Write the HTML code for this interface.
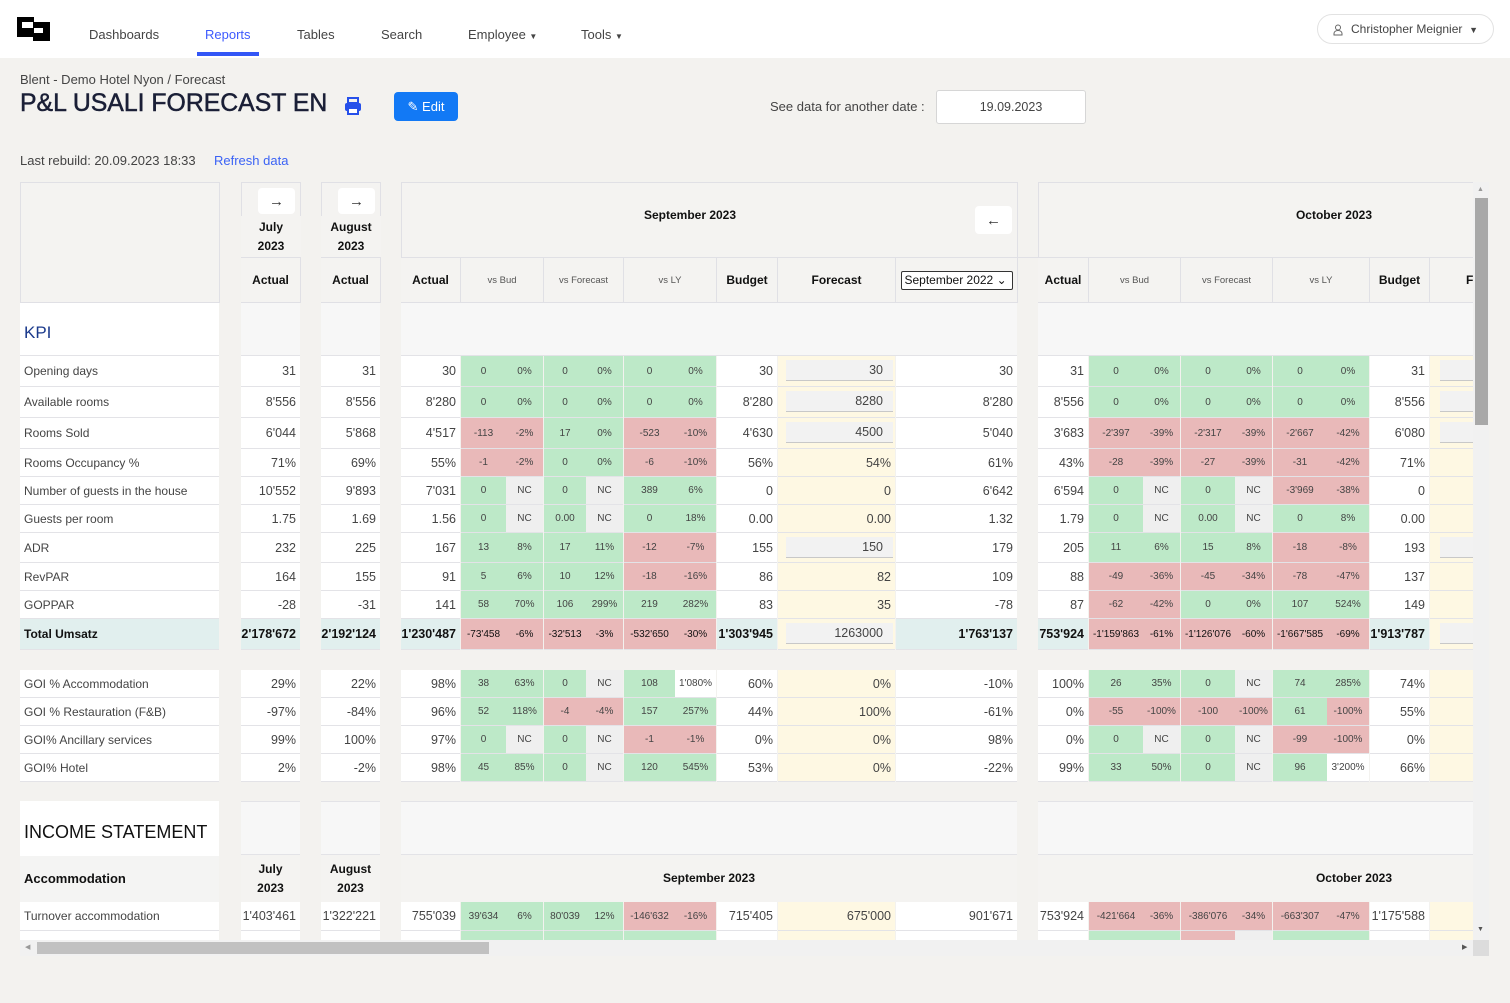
<!DOCTYPE html>
<html><head><meta charset="utf-8"><style>
*{box-sizing:border-box;margin:0;padding:0}
body{width:1510px;height:1003px;background:#f3f2ef;font-family:"Liberation Sans",Arial,sans-serif;color:#444;position:relative;overflow:hidden}
.abs{position:absolute}
.nav{position:absolute;left:0;top:0;width:1510px;height:58px;background:#fff}
.nav span{position:absolute;top:27px;font-size:13px;color:#444}
#wrap{position:absolute;left:0;top:0;width:1473px;height:940px;overflow:hidden}
.r{position:absolute;left:0;width:1700px}
.r>div{position:absolute;top:0;height:100%;display:flex;align-items:center;justify-content:flex-end;padding-right:4px;background:#fff;border-bottom:1px solid #e3e3e7;font-size:12.5px;color:#444;white-space:nowrap}
.r>div.L{justify-content:flex-start;padding-left:4px;font-size:12px}
.L{left:20px;width:199px}.J{left:241px;width:59px}.A{left:321px;width:59px}
.s1{left:401px;width:59px}.s2a{left:461px;width:45px}.s2b{left:506px;width:37px}
.s3a{left:544px;width:42px}.s3b{left:586px;width:37px}.s4a{left:624px;width:51px}.s4b{left:675px;width:41px}
.s5{left:717px;width:60px}.s6{left:778px;width:117px}.s7{left:896px;width:121px}
.o1{left:1038px;width:50px}.o2a{left:1089px;width:54px}.o2b{left:1143px;width:37px}
.o3a{left:1181px;width:54px}.o3b{left:1235px;width:37px}.o4a{left:1273px;width:54px}.o4b{left:1327px;width:42px}
.o5{left:1370px;width:59px}.o6{left:1430px;width:200px}
.r>.s2a,.r>.s2b,.r>.s3a,.r>.s3b,.r>.s4a,.r>.s4b,.r>.o2a,.r>.o2b,.r>.o3a,.r>.o3b,.r>.o4a,.r>.o4b{justify-content:center;padding:0;font-size:10px}
.r>.g{background:#bde9c8}.r>.d{background:#e9b9b9}.r>.n{background:#efefef}.r>.y{background:#fef8e3}
.r>div i{font-style:normal;position:absolute;left:8px;width:107px;top:50%;margin-top:-11px;height:21px;background:#f2f2f2;border-bottom:1px solid #c8c8c8;text-align:right;padding-right:10px;line-height:20px}
.o6 i{left:10px!important}
.t>div{background:#e1efee!important;font-weight:bold;color:#111!important}
.t>div.d{background:#e9b9b9!important;font-weight:normal}
.t>div.y{background:#fef8e3!important}
.hb{position:absolute;background:#f4f3f1;border:1px solid #e0e0e5}
.hc{position:absolute;display:flex;align-items:center;justify-content:center;font-size:12px;font-weight:bold;color:#111;border-right:1px solid #e0e0e5;border-bottom:1px solid #e0e0e5;background:#f4f3f1;text-align:center;line-height:19px}
.hc.sm{font-weight:normal;font-size:9.5px;color:#555}
.btn{position:absolute;background:#fff;border-radius:4px;display:flex;align-items:center;justify-content:center;font-size:15px;color:#333}
</style></head><body>
<div class="nav">
<svg class="abs" style="left:0;top:0" width="60" height="50"><rect x="17" y="17" width="17" height="20" fill="#000"/><rect x="33" y="22" width="17" height="19" fill="#000"/><rect x="22" y="22" width="11" height="6" fill="#fff"/><rect x="34" y="28" width="9" height="5" fill="#fff"/></svg>
<span style="left:89px">Dashboards</span>
<span style="left:205px;color:#3d5afe">Reports</span>
<span style="left:297px">Tables</span>
<span style="left:381px">Search</span>
<span style="left:468px">Employee <small style="font-size:8px">▼</small></span>
<span style="left:581px">Tools <small style="font-size:8px">▼</small></span>
<div class="abs" style="left:197px;top:52px;width:62px;height:4px;background:#3356f6"></div>
<div class="abs" style="left:1317px;top:14px;width:177px;height:30px;border:1px solid #e2e2e2;border-radius:16px;font-size:12px;color:#444;line-height:28px;padding-left:33px">Christopher Meignier&nbsp; <span style="position:static;font-size:9px">▼</span>
<svg class="abs" style="left:15px;top:9px" width="10" height="12"><circle cx="5" cy="3.5" r="2.5" fill="none" stroke="#666"/><path d="M1 11h8v-1.5c0-2-2-3-4-3s-4 1-4 3z" fill="none" stroke="#666"/></svg></div>
</div>
<div class="abs" style="left:20px;top:72px;font-size:13px;color:#444">Blent - Demo Hotel Nyon / Forecast</div>
<div class="abs" style="left:20px;top:90px;font-size:24.8px;color:#1a1f36;-webkit-text-stroke:0.5px #1a1f36">P&amp;L USALI FORECAST EN</div>
<svg class="abs" style="left:344px;top:97px" width="18" height="18"><rect x="4" y="1" width="10" height="5" fill="none" stroke="#2650ea" stroke-width="2"/><rect x="1" y="6" width="16" height="8" rx="2" fill="#2650ea"/><rect x="4" y="11" width="10" height="6" fill="#fff" stroke="#2650ea" stroke-width="2"/></svg>
<div class="abs" style="left:394px;top:92px;width:64px;height:29px;background:#1279f5;border-radius:4px;color:#fff;font-size:13px;line-height:29px;text-align:center">✎ Edit</div>
<div class="abs" style="left:770px;top:99px;font-size:13px;color:#444">See data for another date :</div>
<div class="abs" style="left:936px;top:90px;width:150px;height:34px;background:#fff;border:1px solid #d6d6d6;border-radius:3px;font-size:12.5px;text-align:center;line-height:32px;color:#444">19.09.2023</div>
<div class="abs" style="left:20px;top:153px;font-size:13px;color:#444">Last rebuild: 20.09.2023 18:33</div>
<div class="abs" style="left:214px;top:153px;font-size:13px;color:#3b63f5">Refresh data</div>

<div id="wrap">
<div class="hb" style="left:20px;top:182px;width:200px;height:121px"></div>
<div class="hb" style="left:241px;top:182px;width:60px;height:121px"></div>
<div class="hb" style="left:321px;top:182px;width:60px;height:121px"></div>
<div class="hb" style="left:401px;top:182px;width:617px;height:121px"></div>
<div class="hb" style="left:1038px;top:182px;width:700px;height:121px"></div>
<div class="btn" style="left:258px;top:188px;width:37px;height:26px">→</div>
<div class="btn" style="left:338px;top:188px;width:37px;height:26px">→</div>
<div class="hc" style="left:241px;top:216px;width:60px;height:41px;border:0">July<br>2023</div>
<div class="hc" style="left:321px;top:216px;width:60px;height:41px;border:0">August<br>2023</div>
<div class="hc" style="left:241px;top:257px;width:60px;height:46px;border-top:1px solid #e0e0e5">Actual</div>
<div class="hc" style="left:321px;top:257px;width:60px;height:46px;border-top:1px solid #e0e0e5">Actual</div>
<div class="abs" style="left:401px;top:208px;width:578px;text-align:center;font-size:12px;font-weight:bold;color:#111">September 2023</div>
<div class="btn" style="left:975px;top:206px;width:37px;height:28px">←</div>
<div class="abs" style="left:1038px;top:208px;width:592px;text-align:center;font-size:12px;font-weight:bold;color:#111">October 2023</div>
<div class="abs" style="left:401px;top:257px;width:1300px;height:1px;background:#e0e0e5"></div>
<div class="hc" style="left:401px;top:258px;width:60px;height:45px">Actual</div>
<div class="hc sm" style="left:461px;top:258px;width:83px;height:45px">vs Bud</div>
<div class="hc sm" style="left:544px;top:258px;width:80px;height:45px">vs Forecast</div>
<div class="hc sm" style="left:624px;top:258px;width:93px;height:45px">vs LY</div>
<div class="hc" style="left:717px;top:258px;width:61px;height:45px">Budget</div>
<div class="hc" style="left:778px;top:258px;width:118px;height:45px">Forecast</div>
<div class="hc" style="left:896px;top:258px;width:122px;height:45px"><span style="display:block;width:112px;height:19px;background:#fff;border:1px solid #333;border-radius:2px;font-weight:normal;font-size:12px;line-height:17px;text-align:left;padding-left:3px">September 2022 ⌄</span></div>
<div class="hc" style="left:1038px;top:258px;width:51px;height:45px">Actual</div>
<div class="hc sm" style="left:1089px;top:258px;width:92px;height:45px">vs Bud</div>
<div class="hc sm" style="left:1181px;top:258px;width:92px;height:45px">vs Forecast</div>
<div class="hc sm" style="left:1273px;top:258px;width:97px;height:45px">vs LY</div>
<div class="hc" style="left:1370px;top:258px;width:60px;height:45px">Budget</div>
<div class="hc" style="left:1430px;top:258px;width:100px;height:45px;justify-content:flex-start;padding-left:36px">F</div>

<div class="abs" style="left:20px;top:303px;width:199px;height:53px;background:#fff;border-bottom:1px solid #e3e3e7;font-size:17px;color:#1b3a8c;padding:20px 0 0 4px">KPI</div>
<div class="abs" style="left:241px;top:303px;width:59px;height:53px;background:#f7f7f7;border-bottom:1px solid #e3e3e7"></div>
<div class="abs" style="left:321px;top:303px;width:59px;height:53px;background:#f7f7f7;border-bottom:1px solid #e3e3e7"></div>
<div class="abs" style="left:401px;top:303px;width:616px;height:53px;background:#f7f7f7;border-bottom:1px solid #e3e3e7"></div>
<div class="abs" style="left:1038px;top:303px;width:600px;height:53px;background:#f7f7f7;border-bottom:1px solid #e3e3e7"></div>

<div class="r" style="top:356px;height:31px"><div class="L">Opening days</div><div class="J">31</div><div class="A">31</div><div class="s1">30</div><div class="s2a g">0</div><div class="s2b g">0%</div><div class="s3a g">0</div><div class="s3b g">0%</div><div class="s4a g">0</div><div class="s4b g">0%</div><div class="s5">30</div><div class="s6 y"><i>30</i></div><div class="s7">30</div><div class="o1">31</div><div class="o2a g">0</div><div class="o2b g">0%</div><div class="o3a g">0</div><div class="o3b g">0%</div><div class="o4a g">0</div><div class="o4b g">0%</div><div class="o5">31</div><div class="o6 y"><i></i></div></div>
<div class="r" style="top:387px;height:31px"><div class="L">Available rooms</div><div class="J">8'556</div><div class="A">8'556</div><div class="s1">8'280</div><div class="s2a g">0</div><div class="s2b g">0%</div><div class="s3a g">0</div><div class="s3b g">0%</div><div class="s4a g">0</div><div class="s4b g">0%</div><div class="s5">8'280</div><div class="s6 y"><i>8280</i></div><div class="s7">8'280</div><div class="o1">8'556</div><div class="o2a g">0</div><div class="o2b g">0%</div><div class="o3a g">0</div><div class="o3b g">0%</div><div class="o4a g">0</div><div class="o4b g">0%</div><div class="o5">8'556</div><div class="o6 y"><i></i></div></div>
<div class="r" style="top:418px;height:31px"><div class="L">Rooms Sold</div><div class="J">6'044</div><div class="A">5'868</div><div class="s1">4'517</div><div class="s2a d">-113</div><div class="s2b d">-2%</div><div class="s3a g">17</div><div class="s3b g">0%</div><div class="s4a d">-523</div><div class="s4b d">-10%</div><div class="s5">4'630</div><div class="s6 y"><i>4500</i></div><div class="s7">5'040</div><div class="o1">3'683</div><div class="o2a d">-2'397</div><div class="o2b d">-39%</div><div class="o3a d">-2'317</div><div class="o3b d">-39%</div><div class="o4a d">-2'667</div><div class="o4b d">-42%</div><div class="o5">6'080</div><div class="o6 y"><i></i></div></div>
<div class="r" style="top:449px;height:28px"><div class="L">Rooms Occupancy %</div><div class="J">71%</div><div class="A">69%</div><div class="s1">55%</div><div class="s2a d">-1</div><div class="s2b d">-2%</div><div class="s3a g">0</div><div class="s3b g">0%</div><div class="s4a d">-6</div><div class="s4b d">-10%</div><div class="s5">56%</div><div class="s6 y">54%</div><div class="s7">61%</div><div class="o1">43%</div><div class="o2a d">-28</div><div class="o2b d">-39%</div><div class="o3a d">-27</div><div class="o3b d">-39%</div><div class="o4a d">-31</div><div class="o4b d">-42%</div><div class="o5">71%</div><div class="o6 y"></div></div>
<div class="r" style="top:477px;height:28px"><div class="L">Number of guests in the house</div><div class="J">10'552</div><div class="A">9'893</div><div class="s1">7'031</div><div class="s2a g">0</div><div class="s2b n">NC</div><div class="s3a g">0</div><div class="s3b n">NC</div><div class="s4a g">389</div><div class="s4b g">6%</div><div class="s5">0</div><div class="s6 y">0</div><div class="s7">6'642</div><div class="o1">6'594</div><div class="o2a g">0</div><div class="o2b n">NC</div><div class="o3a g">0</div><div class="o3b n">NC</div><div class="o4a d">-3'969</div><div class="o4b d">-38%</div><div class="o5">0</div><div class="o6 y"></div></div>
<div class="r" style="top:505px;height:28px"><div class="L">Guests per room</div><div class="J">1.75</div><div class="A">1.69</div><div class="s1">1.56</div><div class="s2a g">0</div><div class="s2b n">NC</div><div class="s3a g">0.00</div><div class="s3b n">NC</div><div class="s4a g">0</div><div class="s4b g">18%</div><div class="s5">0.00</div><div class="s6 y">0.00</div><div class="s7">1.32</div><div class="o1">1.79</div><div class="o2a g">0</div><div class="o2b n">NC</div><div class="o3a g">0.00</div><div class="o3b n">NC</div><div class="o4a g">0</div><div class="o4b g">8%</div><div class="o5">0.00</div><div class="o6 y"></div></div>
<div class="r" style="top:533px;height:30px"><div class="L">ADR</div><div class="J">232</div><div class="A">225</div><div class="s1">167</div><div class="s2a g">13</div><div class="s2b g">8%</div><div class="s3a g">17</div><div class="s3b g">11%</div><div class="s4a d">-12</div><div class="s4b d">-7%</div><div class="s5">155</div><div class="s6 y"><i>150</i></div><div class="s7">179</div><div class="o1">205</div><div class="o2a g">11</div><div class="o2b g">6%</div><div class="o3a g">15</div><div class="o3b g">8%</div><div class="o4a d">-18</div><div class="o4b d">-8%</div><div class="o5">193</div><div class="o6 y"><i></i></div></div>
<div class="r" style="top:563px;height:28px"><div class="L">RevPAR</div><div class="J">164</div><div class="A">155</div><div class="s1">91</div><div class="s2a g">5</div><div class="s2b g">6%</div><div class="s3a g">10</div><div class="s3b g">12%</div><div class="s4a d">-18</div><div class="s4b d">-16%</div><div class="s5">86</div><div class="s6 y">82</div><div class="s7">109</div><div class="o1">88</div><div class="o2a d">-49</div><div class="o2b d">-36%</div><div class="o3a d">-45</div><div class="o3b d">-34%</div><div class="o4a d">-78</div><div class="o4b d">-47%</div><div class="o5">137</div><div class="o6 y"></div></div>
<div class="r" style="top:591px;height:28px"><div class="L">GOPPAR</div><div class="J">-28</div><div class="A">-31</div><div class="s1">141</div><div class="s2a g">58</div><div class="s2b g">70%</div><div class="s3a g">106</div><div class="s3b g">299%</div><div class="s4a g">219</div><div class="s4b g">282%</div><div class="s5">83</div><div class="s6 y">35</div><div class="s7">-78</div><div class="o1">87</div><div class="o2a d">-62</div><div class="o2b d">-42%</div><div class="o3a g">0</div><div class="o3b g">0%</div><div class="o4a g">107</div><div class="o4b g">524%</div><div class="o5">149</div><div class="o6 y"></div></div>
<div class="r t" style="top:619px;height:31px"><div class="L">Total Umsatz</div><div class="J">2'178'672</div><div class="A">2'192'124</div><div class="s1">1'230'487</div><div class="s2a d">-73'458</div><div class="s2b d">-6%</div><div class="s3a d">-32'513</div><div class="s3b d">-3%</div><div class="s4a d">-532'650</div><div class="s4b d">-30%</div><div class="s5">1'303'945</div><div class="s6 y"><i style="font-weight:normal;color:#444">1263000</i></div><div class="s7">1'763'137</div><div class="o1">753'924</div><div class="o2a d">-1'159'863</div><div class="o2b d">-61%</div><div class="o3a d">-1'126'076</div><div class="o3b d">-60%</div><div class="o4a d">-1'667'585</div><div class="o4b d">-69%</div><div class="o5">1'913'787</div><div class="o6 y"><i></i></div></div>

<div class="r" style="top:670px;height:28px"><div class="L">GOI % Accommodation</div><div class="J">29%</div><div class="A">22%</div><div class="s1">98%</div><div class="s2a g">38</div><div class="s2b g">63%</div><div class="s3a g">0</div><div class="s3b n">NC</div><div class="s4a g">108</div><div class="s4b">1'080%</div><div class="s5">60%</div><div class="s6 y">0%</div><div class="s7">-10%</div><div class="o1">100%</div><div class="o2a g">26</div><div class="o2b g">35%</div><div class="o3a g">0</div><div class="o3b n">NC</div><div class="o4a g">74</div><div class="o4b g">285%</div><div class="o5">74%</div><div class="o6 y"></div></div>
<div class="r" style="top:698px;height:28px"><div class="L">GOI % Restauration (F&amp;B)</div><div class="J">-97%</div><div class="A">-84%</div><div class="s1">96%</div><div class="s2a g">52</div><div class="s2b g">118%</div><div class="s3a d">-4</div><div class="s3b d">-4%</div><div class="s4a g">157</div><div class="s4b g">257%</div><div class="s5">44%</div><div class="s6 y">100%</div><div class="s7">-61%</div><div class="o1">0%</div><div class="o2a d">-55</div><div class="o2b d">-100%</div><div class="o3a d">-100</div><div class="o3b d">-100%</div><div class="o4a g">61</div><div class="o4b d">-100%</div><div class="o5">55%</div><div class="o6 y"></div></div>
<div class="r" style="top:726px;height:28px"><div class="L">GOI% Ancillary services</div><div class="J">99%</div><div class="A">100%</div><div class="s1">97%</div><div class="s2a g">0</div><div class="s2b n">NC</div><div class="s3a g">0</div><div class="s3b n">NC</div><div class="s4a d">-1</div><div class="s4b d">-1%</div><div class="s5">0%</div><div class="s6 y">0%</div><div class="s7">98%</div><div class="o1">0%</div><div class="o2a g">0</div><div class="o2b n">NC</div><div class="o3a g">0</div><div class="o3b n">NC</div><div class="o4a d">-99</div><div class="o4b d">-100%</div><div class="o5">0%</div><div class="o6 y"></div></div>
<div class="r" style="top:754px;height:28px"><div class="L">GOI% Hotel</div><div class="J">2%</div><div class="A">-2%</div><div class="s1">98%</div><div class="s2a g">45</div><div class="s2b g">85%</div><div class="s3a g">0</div><div class="s3b n">NC</div><div class="s4a g">120</div><div class="s4b g">545%</div><div class="s5">53%</div><div class="s6 y">0%</div><div class="s7">-22%</div><div class="o1">99%</div><div class="o2a g">33</div><div class="o2b g">50%</div><div class="o3a g">0</div><div class="o3b n">NC</div><div class="o4a g">96</div><div class="o4b">3'200%</div><div class="o5">66%</div><div class="o6 y"></div></div>

<div class="abs" style="left:20px;top:801px;width:199px;height:55px;background:#fff;font-size:18px;color:#111;padding:21px 0 0 4px">INCOME STATEMENT</div>
<div class="abs" style="left:241px;top:801px;width:59px;height:54px;background:#f7f7f7;border-bottom:1px solid #e3e3e7;border-top:1px solid #e3e3e7"></div>
<div class="abs" style="left:321px;top:801px;width:59px;height:54px;background:#f7f7f7;border-bottom:1px solid #e3e3e7;border-top:1px solid #e3e3e7"></div>
<div class="abs" style="left:401px;top:801px;width:616px;height:54px;background:#f7f7f7;border-bottom:1px solid #e3e3e7;border-top:1px solid #e3e3e7"></div>
<div class="abs" style="left:1038px;top:801px;width:600px;height:54px;background:#f7f7f7;border-bottom:1px solid #e3e3e7;border-top:1px solid #e3e3e7"></div>
<div class="abs" style="left:20px;top:856px;width:199px;height:47px;background:#f4f4f3;border-bottom:1px solid #e3e3e7;font-size:13px;font-weight:bold;color:#111;padding:15px 0 0 4px">Accommodation</div>
<div class="hc" style="left:241px;top:855px;width:59px;height:47px;border:0">July<br>2023</div>
<div class="hc" style="left:321px;top:855px;width:59px;height:47px;border:0">August<br>2023</div>
<div class="hc" style="left:401px;top:855px;width:616px;height:47px;border:0">September 2023</div>
<div class="hc" style="left:1038px;top:855px;width:632px;height:47px;border:0">October 2023</div>
<div class="r" style="top:902px;height:29px"><div class="L">Turnover accommodation</div><div class="J">1'403'461</div><div class="A">1'322'221</div><div class="s1">755'039</div><div class="s2a g">39'634</div><div class="s2b g">6%</div><div class="s3a g">80'039</div><div class="s3b g">12%</div><div class="s4a d">-146'632</div><div class="s4b d">-16%</div><div class="s5">715'405</div><div class="s6 y">675'000</div><div class="s7">901'671</div><div class="o1">753'924</div><div class="o2a d">-421'664</div><div class="o2b d">-36%</div><div class="o3a d">-386'076</div><div class="o3b d">-34%</div><div class="o4a d">-663'307</div><div class="o4b d">-47%</div><div class="o5">1'175'588</div><div class="o6 y"></div></div>
<div class="r" style="top:931px;height:28px"><div class="L"></div><div class="J"></div><div class="A"></div><div class="s1"></div><div class="s2a g"></div><div class="s2b g"></div><div class="s3a g"></div><div class="s3b g"></div><div class="s4a g"></div><div class="s4b g"></div><div class="s5"></div><div class="s6 y"></div><div class="s7"></div><div class="o1"></div><div class="o2a g"></div><div class="o2b g"></div><div class="o3a d"></div><div class="o3b n"></div><div class="o4a g"></div><div class="o4b g"></div><div class="o5"></div><div class="o6 y"></div></div>
</div>

<div class="abs" style="left:1473px;top:182px;width:16px;height:758px;background:#f1f1f1"></div>
<div class="abs" style="left:1475px;top:198px;width:13px;height:227px;background:#a8a8a8"></div>
<div class="abs" style="left:1477px;top:186px;font-size:7px;color:#999">▲</div>
<div class="abs" style="left:1477px;top:926px;font-size:7px;color:#555">▼</div>
<div class="abs" style="left:20px;top:940px;width:1453px;height:16px;background:#f1f1f1"></div>
<div class="abs" style="left:37px;top:942px;width:452px;height:12px;background:#c1c1c1"></div>
<div class="abs" style="left:25px;top:943px;font-size:7px;color:#999">◀</div>
<div class="abs" style="left:1462px;top:943px;font-size:7px;color:#555">▶</div>
<div class="abs" style="left:1473px;top:940px;width:16px;height:16px;background:#dcdcdc"></div>
</body></html>
